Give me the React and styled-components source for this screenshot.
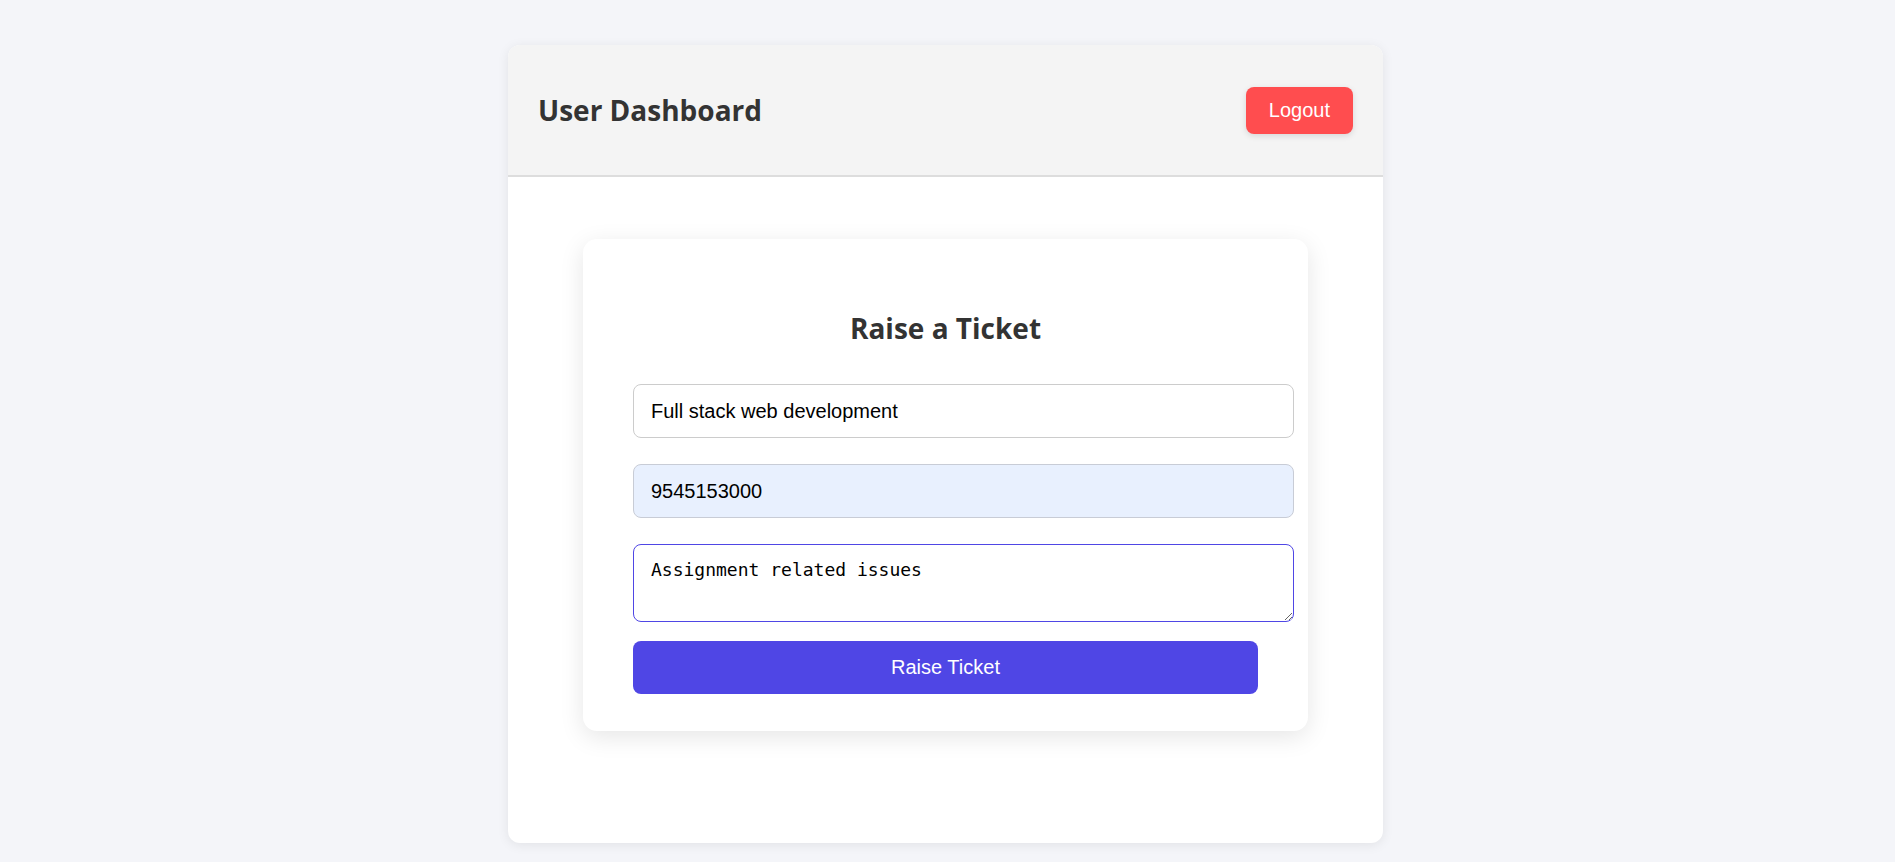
import React, { useState } from 'react'
import styled, { createGlobalStyle } from 'styled-components'

export default () => {
  const [course, setCourse] = useState('Full stack web development')
  const [phone, setPhone] = useState('9545153000')
  const [issue, setIssue] = useState('Assignment related issues')

  return (
    <Page>
      <GlobalStyle />
      <Dashboard>
        <Header>
          <Title>User Dashboard</Title>
          <LogoutButton>Logout</LogoutButton>
        </Header>

        <Body>
          <TicketCard>
            <CardTitle>Raise a Ticket</CardTitle>
            <Field value={course} onChange={e => setCourse(e.target.value)} />
            <Field autofilled value={phone} onChange={e => setPhone(e.target.value)} />
            <IssueBox value={issue} onChange={e => setIssue(e.target.value)} />
            <SubmitButton>Raise Ticket</SubmitButton>
          </TicketCard>
        </Body>
      </Dashboard>
    </Page>
  )
}

/***************************** Styled Components *****************************/

const GlobalStyle = createGlobalStyle`
  body {
    margin: 0;
    background: #f4f5f9;
    font-family: 'Open Sans', 'Noto Sans', sans-serif;
  }
`

const Page = styled.div`
  padding: 45px 4px 19px 0;
`

const Dashboard = styled.div`
  width: 875px;
  height: 798px;
  margin: 0 auto;
  background: #fff;
  border-radius: 12px;
  box-shadow: 0 2px 12px rgba(0, 0, 0, 0.08);
  overflow: hidden;
`

const Header = styled.div`
  display: flex;
  justify-content: space-between;
  align-items: center;
  height: 130px;
  padding: 0 30px;
  background: #f4f4f4;
  border-bottom: 2px solid #ddd;
`

const Title = styled.h1`
  margin: 0;
  font-size: 28px;
  font-weight: 700;
  color: #333;
`

const LogoutButton = styled.button`
  padding: 12px 23px;
  border: none;
  border-radius: 8px;
  background: #ff4d4f;
  color: #fff;
  font-family: 'Liberation Sans', Arial, sans-serif;
  font-size: 20px;
  box-shadow: 0 2px 6px rgba(0, 0, 0, 0.12);
  cursor: pointer;
`

const Body = styled.div`
  padding-top: 62px;
`

const TicketCard = styled.div`
  width: 625px;
  margin: 0 auto;
  padding: 31px 50px 37px;
  background: #fff;
  border-radius: 14px;
  box-shadow: 0 6px 24px rgba(0, 0, 0, 0.1);
`

const CardTitle = styled.h2`
  margin: 39px 0 37px;
  text-align: center;
  font-size: 28px;
  font-weight: 700;
  color: #333;
`

const Field = styled.input`
  display: block;
  width: 100%;
  height: 52px;
  margin: 0 0 26px;
  padding: 0 17px;
  border: 1px solid ${props => props.autofilled ? '#c8ccd6' : '#ccc'};
  border-radius: 8px;
  background: ${props => props.autofilled ? '#e8f0fe' : '#fff'};
  font-family: 'Liberation Sans', Arial, sans-serif;
  font-size: 20px;
  color: #000;
  outline: none;
`

const IssueBox = styled.textarea`
  display: block;
  box-sizing: border-box;
  width: calc(100% + 36px);
  height: 78px;
  margin: 0 0 19px;
  padding: 14px 17px;
  border: 1px solid #4f46e5;
  border-radius: 8px;
  font-family: 'DejaVu Sans Mono', 'Liberation Mono', monospace;
  font-size: 18px;
  color: #000;
  outline: none;
  resize: vertical;
`

const SubmitButton = styled.button`
  display: block;
  width: 100%;
  height: 53px;
  border: none;
  border-radius: 8px;
  background: #4f46e5;
  color: #fff;
  font-family: 'Liberation Sans', Arial, sans-serif;
  font-size: 20px;
  cursor: pointer;
`
